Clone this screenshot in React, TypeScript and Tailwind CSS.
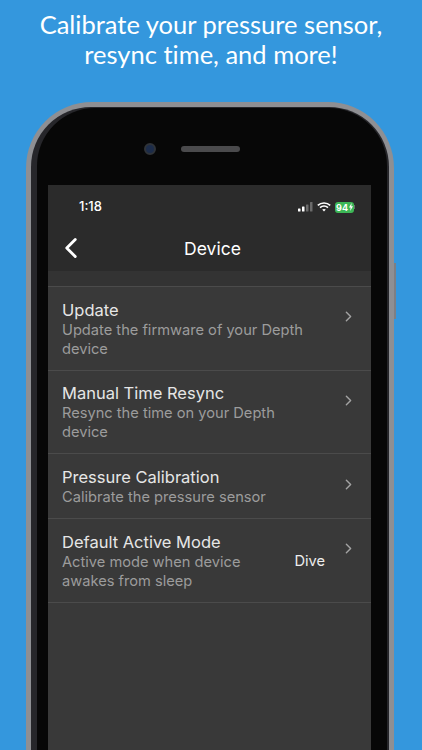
import { ChevronLeft, ChevronRight } from "lucide-react";

const rows = [
  {
    title: "Update",
    lines: ["Update the firmware of your Depth", "device"],
    h: "h-[84px] pt-[13px]",
    chevron: "top-[21px]",
  },
  {
    title: "Manual Time Resync",
    lines: ["Resync the time on your Depth", "device"],
    h: "h-[83px] pt-[12px]",
    chevron: "top-[21px]",
  },
  {
    title: "Pressure Calibration",
    lines: ["Calibrate the pressure sensor"],
    h: "h-[65px] pt-[13px]",
    chevron: "top-[22px]",
  },
  {
    title: "Default Active Mode",
    lines: ["Active mode when device", "awakes from sleep"],
    h: "h-[84px] pt-[13px]",
    chevron: "top-[21px]",
    value: "Dive",
  },
];

const SignalIcon = () => (
  <svg width="15" height="10" viewBox="0 0 15 10">
    <rect x="0" y="6.5" width="2.5" height="3" rx="0.5" fill="#fff" />
    <rect x="4" y="4.5" width="2.5" height="5" rx="0.5" fill="#fff" />
    <rect x="8" y="2.5" width="2.5" height="7" rx="0.5" fill="#6b6b6b" />
    <rect x="12" y="0" width="2.5" height="9.5" rx="0.5" fill="#6b6b6b" />
  </svg>
);

const WifiIcon = () => (
  <svg width="14" height="10" viewBox="0 0 14 10" fill="none">
    <path d="M0.8 3.4C4.3 0.2 9.7 0.2 13.2 3.4" stroke="#fff" strokeWidth="1.7" />
    <path d="M3 5.6C5.3 3.6 8.7 3.6 11 5.6" stroke="#fff" strokeWidth="1.7" />
    <path d="M5.2 7.6L7 9.6L8.8 7.6C7.8 6.7 6.2 6.7 5.2 7.6Z" fill="#fff" />
  </svg>
);

const BoltIcon = () => (
  <svg width="4" height="8" viewBox="0 0 4 8">
    <path d="M2.6 0L0 4.5H1.6L1.2 8L4 3.3H2.3Z" fill="#fff" />
  </svg>
);

const App = () => {
  return (
    <div className="relative h-[750px] w-[422px] overflow-hidden bg-[#3497dd] font-['Inter',sans-serif]">
      <h1 className="pt-[9px] text-center font-['Lato',sans-serif] text-[25.5px] leading-[30px] text-white [font-variant-ligatures:none]">
        Calibrate your pressure sensor,
        <br />
        resync time, and more!
      </h1>

      {/* Phone frame */}
      <div className="relative ml-[26px] mt-[33px] h-[700px] w-[368px] rounded-t-[66px] bg-[#8e8f93] px-[5px] pt-[5px]">
        <div className="absolute -right-[2px] top-[161px] h-[56px] w-[2px] bg-[#7d7f84]" />
        <div className="h-full rounded-t-[60px] bg-[#26262a] pl-[6px] pr-[2px] pt-[1px]">
          <div className="flex h-full flex-col rounded-t-[58px] bg-[#070707] pl-[11px] pr-[16px]">
            {/* Camera and speaker */}
            <div className="flex h-[77px] shrink-0 items-center justify-center gap-[25px] pr-[35px] pt-[5px]">
              <div className="h-[12px] w-[12px] rounded-full border-[2px] border-[#2f3338] bg-[#1c2c4a]" />
              <div className="h-[6px] w-[59px] rounded-full bg-[#4a4a4c]" />
            </div>

            {/* Screen */}
            <div className="flex flex-1 flex-col bg-[#393939]">
              <div className="flex h-[43px] shrink-0 items-center justify-between bg-[#2b2b2b] pl-[31px] pr-[16px] pt-[1px]">
                <span className="text-[13px] font-medium text-white">1:18</span>
                <div className="flex items-center gap-[4px]">
                  <SignalIcon />
                  <WifiIcon />
                  <div className="flex items-center">
                    <div className="flex h-[11px] w-[19px] items-center justify-center gap-[1px] rounded-[3px] bg-[#3db756] text-[9px] font-bold leading-none text-white">
                      94
                      <BoltIcon />
                    </div>
                    <div className="h-[4px] w-[1px] bg-[#6b6b6b]" />
                  </div>
                </div>
              </div>

              <div className="relative flex h-[43px] shrink-0 items-center justify-center bg-[#2b2b2b] pb-[1px] pl-[6px]">
                <ChevronLeft
                  className="absolute left-[6px] top-[3px] text-white"
                  size={34}
                  strokeWidth={2}
                />
                <span className="text-[17.5px] text-white">Device</span>
              </div>

              <div className="h-[15px] shrink-0 bg-[#333333]" />

              <div className="border-t border-[#4b4b4b]">
                {rows.map((row) => (
                  <div
                    key={row.title}
                    className={`relative border-b border-[#4b4b4b] pl-[14px] ${row.h}`}
                  >
                    <div className="mb-[1px] text-[16.5px] leading-[20px] text-[#e6e6e6]">
                      {row.title}
                    </div>
                    {row.lines.map((line) => (
                      <div key={line} className="text-[14.65px] leading-[19px] text-[#9c9c9c]">
                        {line}
                      </div>
                    ))}
                    <ChevronRight
                      className={`absolute right-[14px] text-[#a3a3a3] ${row.chevron}`}
                      size={17}
                      strokeWidth={2}
                    />
                    {row.value && (
                      <span className="absolute right-[46px] top-[33px] text-[14.65px] leading-[19px] text-[#ededed]">
                        {row.value}
                      </span>
                    )}
                  </div>
                ))}
              </div>
            </div>
          </div>
        </div>
      </div>
    </div>
  );
};

export default App;
